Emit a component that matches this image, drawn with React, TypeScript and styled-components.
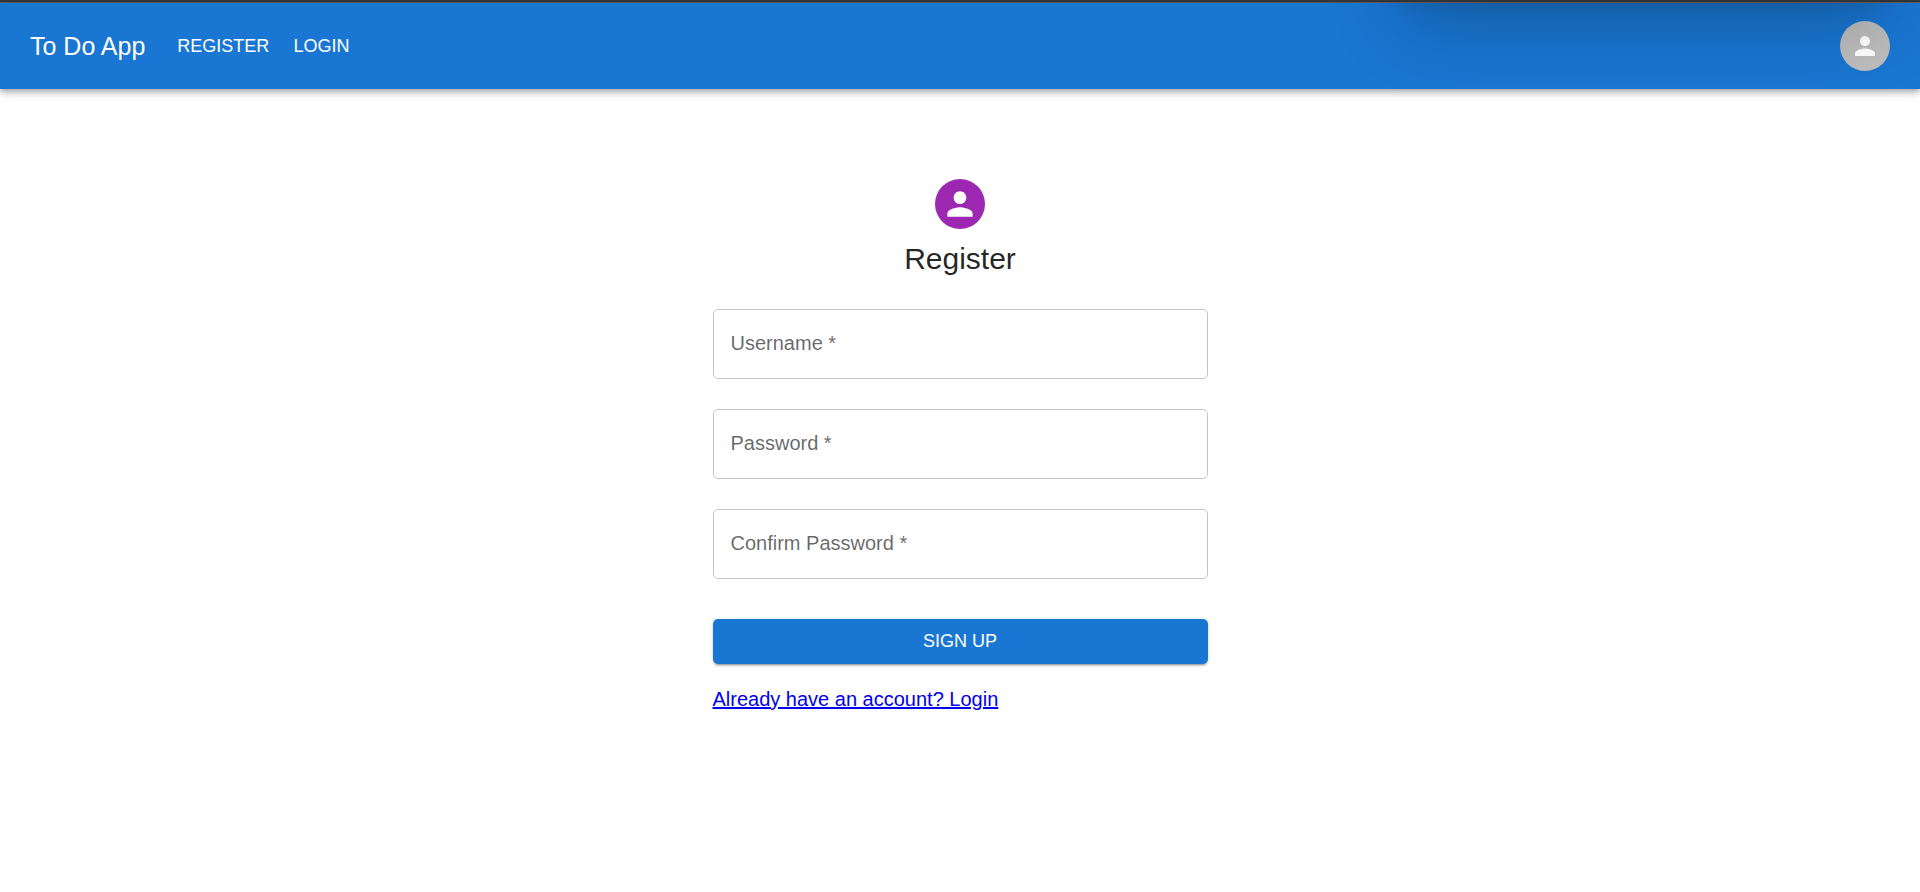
import React from 'react';
import styled, { createGlobalStyle } from 'styled-components';

const GlobalStyle = createGlobalStyle`
  *, *::before, *::after { box-sizing: border-box; }
  body {
    margin: 0;
    background: #fff;
    color: rgba(0, 0, 0, 0.87);
    font-family: "Liberation Sans", Arial, sans-serif;
    font-size: 20px;
    line-height: 30px;
  }
`;

const WindowEdge = styled.div`
  height: 3px;
  border-bottom: 1px solid #5f6062;
  background: #35363a;
`;

const AppBar = styled.header`
  position: relative;
  display: flex;
  align-items: center;
  height: 86px;
  padding: 0 30px;
  color: #fff;
  background: #1976d2;
  box-shadow: 0 2px 5px -1px rgba(0, 0, 0, 0.2), 0 5px 6px rgba(0, 0, 0, 0.14), 0 1px 12px rgba(0, 0, 0, 0.12);
`;

/* Shade cast on the bar by a panel that hangs above its right part. */
const PanelShade = styled.div`
  position: absolute;
  inset: 0;
  overflow: hidden;
  pointer-events: none;
  &::before {
    content: "";
    position: absolute;
    right: 36px;
    bottom: 100%;
    width: 482px;
    height: 200px;
    box-shadow: 0 24px 70px rgba(0, 0, 0, 0.22), 0 2px 16px rgba(0, 0, 0, 0.08);
  }
`;

const Brand = styled.div`
  margin-right: 20px;
  font-size: 25px;
`;

const Nav = styled.nav`
  display: flex;
  flex-grow: 1;
`;

const NavLink = styled.a`
  padding: 8px 12px;
  color: inherit;
  font-size: 18px;
  line-height: 28px;
  text-decoration: none;
  text-transform: uppercase;
`;

const Avatar = styled.span<{ $color: string }>`
  display: flex;
  align-items: center;
  justify-content: center;
  width: 50px;
  height: 50px;
  border-radius: 50%;
  color: #fff;
  background: ${({ $color }) => $color};
`;

const AccountButton = styled.button`
  padding: 0;
  border: 0;
  border-radius: 50%;
  background: none;
  cursor: pointer;
`;

const Main = styled.main`
  display: flex;
  flex-direction: column;
  align-items: center;
  width: 100%;
  max-width: 555px;
  margin: 90px auto 0;
  padding: 0 30px;
`;

const Title = styled.h1`
  margin: 10px 0 30px;
  font-size: 30px;
  font-weight: 400;
  line-height: 40px;
`;

const Form = styled.form`
  display: flex;
  flex-direction: column;
  gap: 30px;
  width: 100%;
`;

const Field = styled.div`
  display: grid;
  > * { grid-area: 1 / 1; }
`;

const FieldLabel = styled.label`
  align-self: center;
  padding: 0 18px 2px;
  color: rgba(0, 0, 0, 0.6);
  pointer-events: none;
`;

const Input = styled.input`
  width: 100%;
  height: 70px;
  padding: 20px 17px;
  border: 1px solid #c4c4c4;
  border-radius: 5px;
  background: none;
  font: inherit;
  &:focus + label, &:valid + label { visibility: hidden; }
`;

const SubmitButton = styled.button`
  height: 45px;
  margin-top: 10px;
  padding: 0 20px;
  border: 0;
  border-radius: 5px;
  color: #fff;
  background: #1976d2;
  box-shadow: 0 3px 1px -2px rgba(0, 0, 0, 0.2), 0 2px 2px rgba(0, 0, 0, 0.14), 0 1px 5px rgba(0, 0, 0, 0.12);
  font-family: inherit;
  font-size: 18px;
  text-transform: uppercase;
  cursor: pointer;
`;

const LoginLink = styled.a`
  align-self: flex-start;
  margin-top: 20px;
  color: #0000ee;
  text-decoration: underline;
`;

const PersonIcon = ({ size }: { size: number }) => (
  <svg width={size} height={size} viewBox="0 0 24 24" fill="currentColor" aria-hidden="true">
    <path d="M12 12c2.21 0 4-1.79 4-4s-1.79-4-4-4-4 1.79-4 4 1.79 4 4 4zm0 2c-2.67 0-8 1.34-8 4v2h16v-2c0-2.66-5.33-4-8-4z" />
  </svg>
);

const fields = [
  { id: 'username', label: 'Username', type: 'text' },
  { id: 'password', label: 'Password', type: 'password' },
  { id: 'confirm-password', label: 'Confirm Password', type: 'password' },
];

export default function App() {
  return (
    <>
      <GlobalStyle />
      <WindowEdge />
      <AppBar>
        <Brand>To Do App</Brand>
        <Nav>
          <NavLink href="#register">Register</NavLink>
          <NavLink href="#login">Login</NavLink>
        </Nav>
        <AccountButton type="button" aria-label="Account">
          <Avatar $color="#bdbdbd"><PersonIcon size={30} /></Avatar>
        </AccountButton>
        <PanelShade />
      </AppBar>
      <Main>
        <Avatar $color="#9c27b0"><PersonIcon size={38} /></Avatar>
        <Title>Register</Title>
        <Form onSubmit={(event) => event.preventDefault()}>
          {fields.map(({ id, label, type }) => (
            <Field key={id}>
              <Input id={id} type={type} required />
              <FieldLabel htmlFor={id}>{label} *</FieldLabel>
            </Field>
          ))}
          <SubmitButton type="submit">Sign Up</SubmitButton>
        </Form>
        <LoginLink href="#login">Already have an account? Login</LoginLink>
      </Main>
    </>
  );
}
